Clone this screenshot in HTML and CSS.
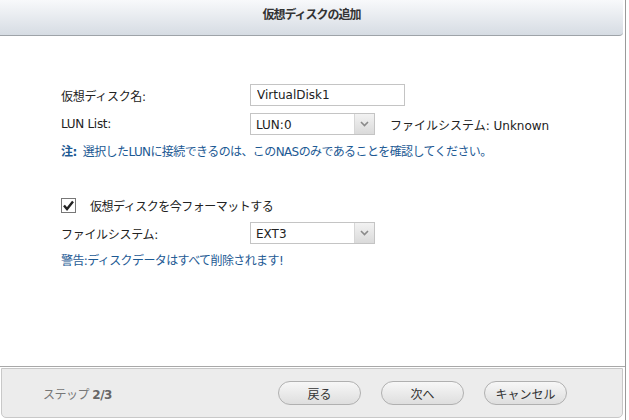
FILE: index.html
```html
<!DOCTYPE html>
<html lang="ja">
<head>
  <meta charset="UTF-8">
  <title>仮想ディスクの追加</title>
  <link rel="stylesheet" href="styles.css">
</head>
<body>
  <div class="dialog">
    <div class="dialog-header">仮想ディスクの追加</div>

    <div class="dialog-body">
      <div class="form-row">
        <label class="form-label">仮想ディスク名:</label>
        <input class="text-input" type="text" value="VirtualDisk1">
      </div>
      <div class="form-row">
        <label class="form-label">LUN List:</label>
        <div class="select-box">
          <span class="select-value">LUN:0</span>
          <span class="select-arrow">
            <svg width="9" height="6" viewBox="0 0 9 6"><path d="M1 1 L4.5 4.5 L8 1" fill="none" stroke="#8a8a8a" stroke-width="1.6"/></svg>
          </span>
        </div>
        <span class="fs-info">ファイルシステム: Unknown</span>
      </div>
      <p class="note"><b>注:</b> 選択したLUNに接続できるのは、このNASのみであることを確認してください。</p>

      <div class="check-row">
        <span class="checkbox">
          <svg width="13" height="13" viewBox="0 0 13 13"><path d="M2 6.5 L5 10 L11 2.5" fill="none" stroke="#222" stroke-width="2.4"/></svg>
        </span>
        <span>仮想ディスクを今フォーマットする</span>
      </div>
      <div class="form-row">
        <label class="form-label">ファイルシステム:</label>
        <div class="select-box">
          <span class="select-value">EXT3</span>
          <span class="select-arrow">
            <svg width="9" height="6" viewBox="0 0 9 6"><path d="M1 1 L4.5 4.5 L8 1" fill="none" stroke="#8a8a8a" stroke-width="1.6"/></svg>
          </span>
        </div>
      </div>
      <p class="warning">警告:ディスクデータはすべて削除されます!</p>
    </div>

    <div class="dialog-footer">
      <span class="step">ステップ <b>2/3</b></span>
      <div class="buttons">
        <button class="btn">戻る</button>
        <button class="btn">次へ</button>
        <button class="btn">キャンセル</button>
      </div>
    </div>
  </div>
</body>
</html>
```

FILE: styles.css
```css
body {
  margin: 0;
  background: #fff;
  font-family: "DejaVu Sans", "Noto Sans CJK JP", sans-serif;
  font-size: 12px;
  color: #222;
}

.dialog {
  width: 626px;
  height: 420px;
  border-right: 1px solid #9a9a9a;
  display: flex;
  flex-direction: column;
  box-sizing: border-box;
}

.dialog-header {
  height: 35px;
  line-height: 28px;
  text-align: center;
  font-family: "Noto Sans CJK JP", sans-serif;
  font-weight: bold;
  font-size: 12px;
  letter-spacing: -1px;
  color: #333;
  background: linear-gradient(#f8f9fb, #d6dce3);
  border-bottom: 1px solid #9ea3a8;
  border-radius: 0 0 4px 0;
  margin-right: 2px;
}

.dialog-body {
  flex: 1;
  padding: 48px 0 0 61px;
  border-bottom: 1px solid #a8a8a8;
}

.form-row {
  display: flex;
  align-items: center;
  height: 22px;
  margin-bottom: 7px;
}

.form-label {
  width: 189px;
  letter-spacing: -0.3px;
}

.text-input {
  width: 155px;
  height: 22px;
  box-sizing: border-box;
  border: 1px solid #c4c4c4;
  padding: 2px 6px;
  font-family: inherit;
  font-size: 12px;
  color: #222;
  outline: none;
}

.select-box {
  width: 125px;
  height: 22px;
  box-sizing: border-box;
  border: 1px solid #c4c4c4;
  display: flex;
  align-items: stretch;
}

.select-value {
  flex: 1;
  padding: 4px 0 0 5px;
}

.select-arrow {
  width: 19px;
  display: flex;
  align-items: center;
  justify-content: center;
  background: linear-gradient(#f2f2f2, #dadada);
  border-left: 1px solid #d6d6d6;
}

.fs-info {
  margin-left: 15px;
}

.note,
.warning {
  margin: 0;
  color: #1d5a94;
  letter-spacing: -0.6px;
}

.note {
  margin-top: 2px;
}

.note b {
  font-weight: bold;
  margin-right: 3px;
}

.check-row {
  display: flex;
  align-items: center;
  margin: 38px 0 8px;
  letter-spacing: -0.5px;
}

.checkbox {
  width: 15px;
  height: 15px;
  box-sizing: border-box;
  border: 1px solid #777;
  background: #fff;
  display: flex;
  align-items: center;
  justify-content: center;
  margin-right: 14px;
}

.warning {
  margin-top: 0;
}

.dialog-footer {
  height: 48px;
  margin: 1px 2px 2px 1px;
  border: 1px solid #c8c8c8;
  border-radius: 0 0 5px 5px;
  background: #ececec;
  display: flex;
  align-items: center;
  justify-content: space-between;
  padding: 0 55px 0 41px;
}

.step {
  color: #777;
  font-size: 12px;
  letter-spacing: -0.5px;
}

.step b {
  color: #666;
}

.buttons {
  display: flex;
  gap: 20px;
}

.btn {
  width: 83px;
  height: 24px;
  border: 1px solid #b0b0b0;
  border-radius: 12px;
  background: linear-gradient(#f7f7f7, #dedede);
  font-family: "Noto Sans CJK JP", sans-serif;
  font-size: 12px;
  color: #333;
  padding: 0;
}
```
